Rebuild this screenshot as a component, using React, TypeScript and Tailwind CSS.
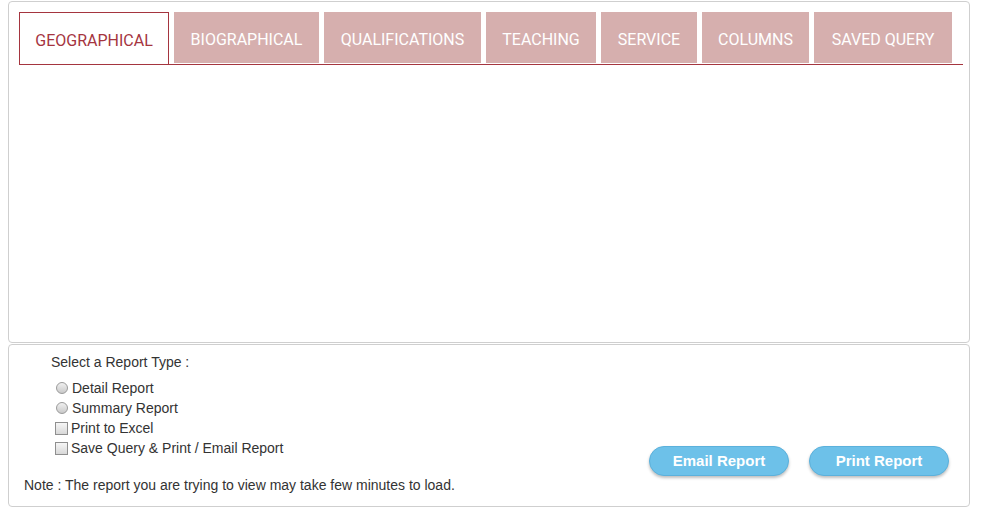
import { useState } from 'react'

const tabs = [
  { label: 'GEOGRAPHICAL', w: 'w-[150px]' },
  { label: 'BIOGRAPHICAL', w: 'w-[145px]' },
  { label: 'QUALIFICATIONS', w: 'w-[157px]' },
  { label: 'TEACHING', w: 'w-[110px]' },
  { label: 'SERVICE', w: 'w-[96px]' },
  { label: 'COLUMNS', w: 'w-[107px]' },
  { label: 'SAVED QUERY', w: 'w-[138px]' },
]

const radioCls =
  "m-0 appearance-none w-[12px] h-[12px] rounded-full border border-[#9a9a9a] bg-[linear-gradient(#f0f0f0,#c9c9c9)] checked:bg-[radial-gradient(#333_30%,#e6e6e6_40%)]"
const checkCls =
  "m-0 appearance-none w-[13px] h-[13px] border border-[#8f8f8f] bg-[linear-gradient(#f6f6f6,#d8d8d8)] checked:bg-[#888]"

export default function App() {
  const [active, setActive] = useState(0)
  const [reportType, setReportType] = useState('')

  return (
    <div className="w-[981px] h-[519px] bg-white pt-px pl-2 font-['Liberation_Sans',Arial,sans-serif] text-[14px] text-[#333]">
      <div className="w-[962px] h-[342px] border border-[#cfcfcf] rounded-[4px] pt-[10px] pl-[10px] pr-[6px]">
        <div className="flex gap-[5px] border-b border-[#a5353f] font-['Roboto',sans-serif] text-[16px]">
          {tabs.map((t, i) => (
            <button
              key={t.label}
              onClick={() => setActive(i)}
              className={
                (i === active
                  ? 'h-[52px] pt-1 border border-b-0 border-[#a5353f] bg-white text-[#a5353f] '
                  : 'h-[51px] pt-1 bg-[#d6afae] text-white ') + t.w
              }
            >
              {t.label}
            </button>
          ))}
        </div>
      </div>

      <div className="mt-px w-[962px] h-[163px] border border-[#cfcfcf] rounded-[4px] flex justify-between">
        <div className="pt-[7px]">
          <div className="pl-[42px] h-5 leading-5">Select a Report Type :</div>
          <div className="mt-[6px] pl-[47px]">
            <label className="flex items-center h-5 gap-[4px]">
              <input
                type="radio"
                name="rt"
                checked={reportType === 'detail'}
                onChange={() => setReportType('detail')}
                className={radioCls}
              />
              Detail Report
            </label>
            <label className="flex items-center h-5 gap-[4px]">
              <input
                type="radio"
                name="rt"
                checked={reportType === 'summary'}
                onChange={() => setReportType('summary')}
                className={radioCls}
              />
              Summary Report
            </label>
            <label className="flex items-center h-5 gap-[3px] -ml-px">
              <input type="checkbox" className={checkCls} />
              Print to Excel
            </label>
            <label className="flex items-center h-5 gap-[3px] -ml-px">
              <input type="checkbox" className={checkCls} />
              Save Query &amp; Print / Email Report
            </label>
          </div>
          <div className="mt-[17px] pl-[15px] h-5 leading-5">Note : The report you are trying to view may take few minutes to load.</div>
        </div>

        <div className="flex items-end gap-5 pr-5 pb-[30px]">
          <button className="w-[140px] h-[30px] rounded-full bg-[#6dc1e9] border border-[#5bb1dc] text-white font-bold text-[15px] shadow-[0_2px_3px_rgba(0,0,0,0.25)]">
            Email Report
          </button>
          <button className="w-[140px] h-[30px] rounded-full bg-[#6dc1e9] border border-[#5bb1dc] text-white font-bold text-[15px] shadow-[0_2px_3px_rgba(0,0,0,0.25)]">
            Print Report
          </button>
        </div>
      </div>
    </div>
  )
}
